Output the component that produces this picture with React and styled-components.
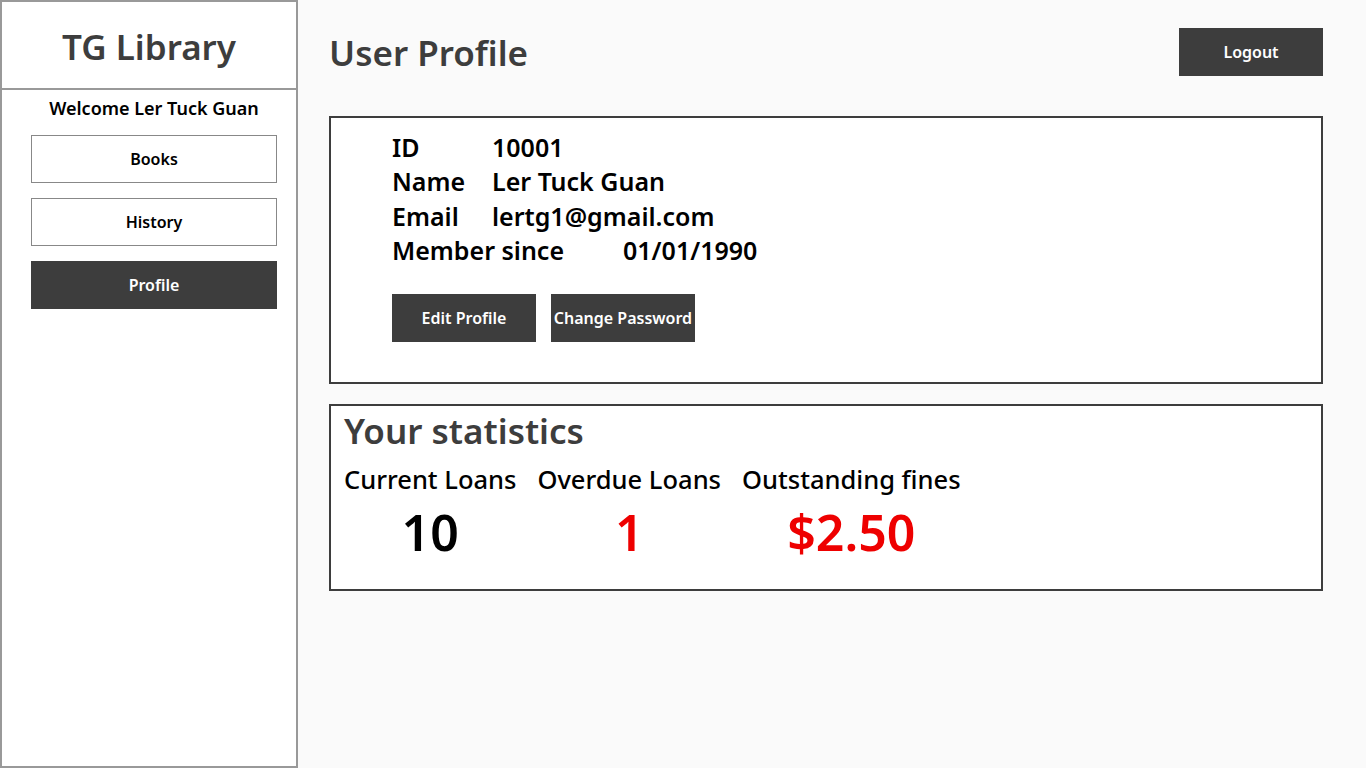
import styled, { createGlobalStyle } from "styled-components";

const GlobalStyle = createGlobalStyle`
  html, body {
    margin: 0;
    padding: 0;
    background: #fafafa;
    font-family: "Noto Sans", "Open Sans", sans-serif;
  }
  * {
    box-sizing: border-box;
  }
`;

const Page = styled.div`
  display: flex;
  height: 768px;
`;

const Sidebar = styled.aside`
  width: 298px;
  flex-shrink: 0;
  background: #ffffff;
  border: 2px solid #999999;
  display: flex;
  flex-direction: column;
`;

const Brand = styled.div`
  height: 88px;
  border-bottom: 2px solid #999999;
  display: flex;
  align-items: center;
  justify-content: center;
  font-size: 35px;
  font-weight: 600;
  color: #3d3d3d;
  padding-top: 2px;
`;

const NavArea = styled.div`
  padding: 0 19px 0 29px;
`;

const Welcome = styled.p`
  margin: 6px 0 0;
  text-align: center;
  font-size: 18px;
  font-weight: 600;
  color: #000000;
`;

const Nav = styled.nav`
  display: flex;
  flex-direction: column;
  gap: 15px;
  margin-top: 15px;
`;

const NavButton = styled.button`
  height: 48px;
  width: 246px;
  border: 1px solid ${(props) => (props.active ? "#3d3d3d" : "#888888")};
  background: ${(props) => (props.active ? "#3d3d3d" : "#ffffff")};
  color: ${(props) => (props.active ? "#ffffff" : "#000000")};
  font-family: inherit;
  font-size: 16px;
  font-weight: 600;
  cursor: pointer;
`;

const Main = styled.main`
  flex: 1;
  padding: 28px 43px 0 31px;
`;

const TopBar = styled.div`
  display: flex;
  justify-content: space-between;
  align-items: flex-start;
  margin-bottom: 40px;
`;

const Title = styled.h1`
  margin: 2px 0 0;
  font-size: 35px;
  font-weight: 600;
  color: #3d3d3d;
  line-height: 46px;
`;

const DarkButton = styled.button`
  width: 144px;
  height: 48px;
  border: none;
  background: #3d3d3d;
  color: #ffffff;
  font-family: inherit;
  font-size: 16px;
  font-weight: 600;
  padding: 0;
  cursor: pointer;
  white-space: nowrap;
`;

const Card = styled.section`
  background: #ffffff;
  border: 2px solid #3d3d3d;
`;

const ProfileCard = styled(Card)`
  height: 268px;
  padding: 12px 61px 0;
`;

const InfoRow = styled.div`
  display: flex;
  font-size: 25px;
  font-weight: 600;
  color: #000000;
  line-height: 34.3px;
`;

const InfoLabel = styled.span`
  width: ${(props) => props.width || 100}px;
  flex-shrink: 0;
`;

const Actions = styled.div`
  display: flex;
  gap: 15px;
  margin-top: 27px;
`;

const StatsCard = styled(Card)`
  height: 187px;
  margin-top: 20px;
  padding: 2px 13px 0;
`;

const StatsTitle = styled.h2`
  margin: 0;
  font-size: 35px;
  font-weight: 600;
  color: #3d3d3d;
  line-height: 46px;
`;

const StatsRow = styled.div`
  display: flex;
  gap: 21px;
  margin-top: 8px;
`;

const Stat = styled.div`
  display: flex;
  flex-direction: column;
  align-items: center;
`;

const StatLabel = styled.span`
  font-size: 25.5px;
  font-weight: 500;
  color: #000000;
  line-height: 34px;
`;

const StatValue = styled.span`
  font-size: 50px;
  font-weight: 600;
  line-height: 64px;
  margin-top: 4px;
  color: ${(props) => (props.alert ? "#ee0000" : "#000000")};
`;

export default function App() {
  return (
    <>
      <GlobalStyle />
      <Page>
        <Sidebar>
          <Brand>TG Library</Brand>
          <NavArea>
            <Welcome>Welcome Ler Tuck Guan</Welcome>
            <Nav>
              <NavButton>Books</NavButton>
              <NavButton>History</NavButton>
              <NavButton active>Profile</NavButton>
            </Nav>
          </NavArea>
        </Sidebar>
        <Main>
          <TopBar>
            <Title>User Profile</Title>
            <DarkButton>Logout</DarkButton>
          </TopBar>
          <ProfileCard>
            <InfoRow>
              <InfoLabel>ID</InfoLabel>
              <span>10001</span>
            </InfoRow>
            <InfoRow>
              <InfoLabel>Name</InfoLabel>
              <span>Ler Tuck Guan</span>
            </InfoRow>
            <InfoRow>
              <InfoLabel>Email</InfoLabel>
              <span>lertg1@gmail.com</span>
            </InfoRow>
            <InfoRow>
              <InfoLabel width={231}>Member since</InfoLabel>
              <span>01/01/1990</span>
            </InfoRow>
            <Actions>
              <DarkButton>Edit Profile</DarkButton>
              <DarkButton>Change Password</DarkButton>
            </Actions>
          </ProfileCard>
          <StatsCard>
            <StatsTitle>Your statistics</StatsTitle>
            <StatsRow>
              <Stat>
                <StatLabel>Current Loans</StatLabel>
                <StatValue>10</StatValue>
              </Stat>
              <Stat>
                <StatLabel>Overdue Loans</StatLabel>
                <StatValue alert>1</StatValue>
              </Stat>
              <Stat>
                <StatLabel>Outstanding fines</StatLabel>
                <StatValue alert>$2.50</StatValue>
              </Stat>
            </StatsRow>
          </StatsCard>
        </Main>
      </Page>
    </>
  );
}
